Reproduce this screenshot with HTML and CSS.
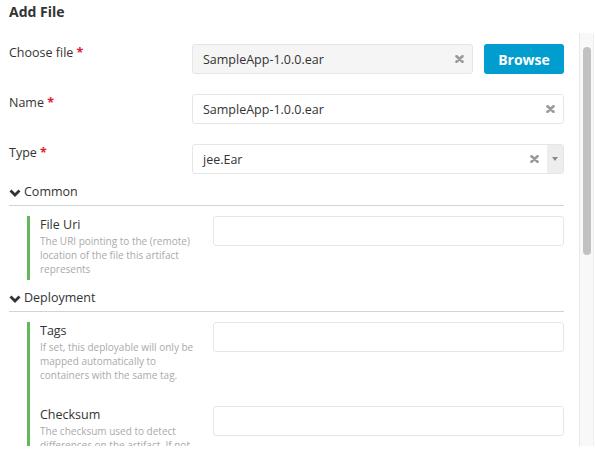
FILE: index.html
```html
<!DOCTYPE html>
<html>
<head>
<meta charset="utf-8">
<link rel="stylesheet" href="styles.css">
</head>
<body>
<div class="dialog">
  <h1 class="title">Add File</h1>
  <div class="body">
    <div class="form">
      <div class="rows">
        <div class="row">
          <label class="label">Choose file <span class="req">*</span></label>
          <div class="control with-btn">
            <div class="input readonly">
              <span class="value">SampleApp-1.0.0.ear</span>
              <svg class="clear" width="9" height="8" viewBox="0 0 9 8"><path d="M1.5 1.2L7.5 6.8M7.5 1.2L1.5 6.8" stroke="#9a9a9a" stroke-width="2.6" stroke-linecap="round"/></svg>
            </div>
            <button class="btn">Browse</button>
          </div>
        </div>
        <div class="row">
          <label class="label">Name <span class="req">*</span></label>
          <div class="control">
            <div class="input">
              <span class="value">SampleApp-1.0.0.ear</span>
              <svg class="clear" width="9" height="8" viewBox="0 0 9 8"><path d="M1.5 1.2L7.5 6.8M7.5 1.2L1.5 6.8" stroke="#9a9a9a" stroke-width="2.6" stroke-linecap="round"/></svg>
            </div>
          </div>
        </div>
        <div class="row">
          <label class="label">Type <span class="req">*</span></label>
          <div class="control">
            <div class="input select">
              <span class="value">jee.Ear</span>
              <svg class="clear" width="9" height="8" viewBox="0 0 9 8"><path d="M1.5 1.2L7.5 6.8M7.5 1.2L1.5 6.8" stroke="#9a9a9a" stroke-width="2.6" stroke-linecap="round"/></svg>
              <span class="arrow"><svg width="6" height="4" viewBox="0 0 6 4"><path d="M0 0H6L3 4Z" fill="#8a8a8a"/></svg></span>
            </div>
          </div>
        </div>
      </div>

      <div class="section-head">
        <svg class="chev" width="12" height="8" viewBox="0 0 12 8"><path d="M1.5 1.5L6 6L10.5 1.5" fill="none" stroke="#333" stroke-width="2.8"/></svg>
        <span>Common</span>
      </div>
      <div class="section-body">
        <div class="field">
          <div class="field-info">
            <div class="field-name">File Uri</div>
            <div class="field-desc">The URI pointing to the (remote) location of the file this artifact represents</div>
          </div>
          <div class="input plain"></div>
        </div>
      </div>

      <div class="section-head">
        <svg class="chev" width="12" height="8" viewBox="0 0 12 8"><path d="M1.5 1.5L6 6L10.5 1.5" fill="none" stroke="#333" stroke-width="2.8"/></svg>
        <span>Deployment</span>
      </div>
      <div class="section-body">
        <div class="field">
          <div class="field-info">
            <div class="field-name">Tags</div>
            <div class="field-desc">If set, this deployable will only be mapped automatically to containers with the same tag.</div>
          </div>
          <div class="input plain"></div>
        </div>
        <div class="field">
          <div class="field-info">
            <div class="field-name">Checksum</div>
            <div class="field-desc">The checksum used to detect differences on the artifact. If not provided, it will be calculated by the plugin.</div>
          </div>
          <div class="input plain"></div>
        </div>
      </div>
    </div>
    <div class="scrollbar"><div class="thumb"></div></div>
  </div>
</div>
</body>
</html>
```

FILE: styles.css
```css
* { box-sizing: border-box; }
html, body { margin: 0; padding: 0; background: #fff; }
body {
  font-family: "Open Sans", "DejaVu Sans", sans-serif;
  color: #333;
  font-size: 12px;
}
.dialog { width: 595px; height: 454px; overflow: hidden; }
.title {
  margin: 0 0 11px 0;
  padding: 2px 9px 0;
  font-size: 14px;
  line-height: 20px;
  font-weight: 700;
  color: #333;
}
.body {
  display: flex;
  height: 413px;
  overflow: hidden;
}
.form {
  flex: 1;
  padding: 11px 15px 0 9px;
  min-width: 0;
}
.rows { display: flex; flex-direction: column; gap: 20px; }
.row { display: flex; align-items: flex-start; height: 30px; }
.label {
  width: 183px;
  flex: none;
  line-height: 18px;
  font-size: 12.5px;
  color: #333;
}
.req { color: #e0192b; font-weight: 700; }
.control { flex: 1; display: flex; gap: 11px; min-width: 0; }
.input {
  flex: 1;
  height: 30px;
  border: 1px solid #e6e6e6;
  border-radius: 3px;
  background: #fff;
  display: flex;
  align-items: center;
  padding: 0 8px 0 10px;
  font-size: 12.5px;
  color: #333;
}
.input.readonly { background: #f5f5f5; }
.input .value { flex: 1; }
.clear { flex: none; }
.input.select { padding-right: 0; }
.input.select .arrow {
  margin-left: 8px;
  width: 16px;
  align-self: stretch;
  background: #ededed;
  display: flex;
  align-items: center;
  justify-content: center;
  border-radius: 0 2px 2px 0;
}
.btn {
  flex: none;
  width: 80px;
  height: 30px;
  border: 0;
  border-radius: 3px;
  background: #009dce;
  color: #fff;
  font-family: inherit;
  font-size: 14px;
  font-weight: 700;
  padding: 0;
}
.section-head {
  margin-top: 9px;
  display: flex;
  align-items: center;
  gap: 3px;
  line-height: 18px;
  padding-bottom: 4px;
  border-bottom: 1px solid #d3d3d3;
  font-size: 12.5px;
  color: #333;
}
.chev { margin-top: 1px; }
.section-body {
  margin: 10px 0 0 18px;
  border-left: 3px solid #62b95a;
  padding-left: 10px;
}
.section-body + .section-head { margin-top: 9px; }
.field {
  display: flex;
  align-items: flex-start;
  padding-bottom: 4px;
}
.field + .field { margin-top: 20px; }
.field-info { width: 173px; flex: none; padding-right: 8px; }
.field-name { font-size: 12.5px; line-height: 18px; color: #333; }
.field-desc { font-size: 10px; line-height: 14px; color: #aaa; }
.input.plain { height: 30px; }
.scrollbar {
  flex: none;
  width: 15px;
  margin-right: 1px;
  background: #f8f8f8;
  border-left: 1px solid #e8e8e8;
  border-right: 1px solid #f0f0f0;
  padding: 14px 2px 0 3px;
}
.thumb {
  width: 8px;
  height: 208px;
  border-radius: 5px;
  background: #c1c1c1;
}
```
